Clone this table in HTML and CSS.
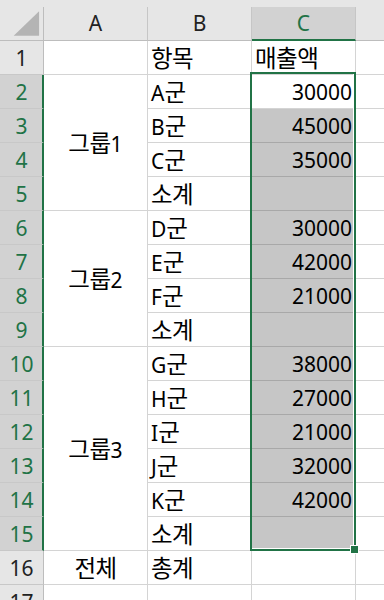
FILE: index.html
```html
<!DOCTYPE html>
<html lang="ko">
<head>
<meta charset="utf-8">
<link rel="stylesheet" href="styles.css">
</head>
<body>
<div class="wrap">
  <div class="topstrip"></div>
  <div class="sheet">
    <div class="corner"><svg width="44" height="34" viewBox="0 0 44 34"><polygon points="14,29 40,29 40,4" fill="#b4b4b4"/></svg></div>
    <div class="colhead">A</div>
    <div class="colhead">B</div>
    <div class="colhead sel">C</div>
    <div class="colhead last"></div>

    <div class="rowhead">1</div>
    <div class="cell"></div>
    <div class="cell"><span class="t"><span class="ko">항목</span></span></div>
    <div class="cell"><span class="t"><span class="ko">매출액</span></span></div>
    <div class="cell last"></div>

    <div class="rowhead sel">2</div>
    <div class="cell merged r2-5"><span class="t"><span class="ko">그룹</span>1</span></div>
    <div class="cell"><span class="t">A<span class="ko">군</span></span></div>
    <div class="cell num">30000</div>
    <div class="cell last"></div>

    <div class="rowhead sel">3</div>
    <div class="cell"><span class="t">B<span class="ko">군</span></span></div>
    <div class="cell num gray">45000</div>
    <div class="cell last"></div>

    <div class="rowhead sel">4</div>
    <div class="cell"><span class="t">C<span class="ko">군</span></span></div>
    <div class="cell num gray">35000</div>
    <div class="cell last"></div>

    <div class="rowhead sel">5</div>
    <div class="cell"><span class="t"><span class="ko">소계</span></span></div>
    <div class="cell num gray"></div>
    <div class="cell last"></div>

    <div class="rowhead sel">6</div>
    <div class="cell merged r6-9"><span class="t"><span class="ko">그룹</span>2</span></div>
    <div class="cell"><span class="t">D<span class="ko">군</span></span></div>
    <div class="cell num gray">30000</div>
    <div class="cell last"></div>

    <div class="rowhead sel">7</div>
    <div class="cell"><span class="t">E<span class="ko">군</span></span></div>
    <div class="cell num gray">42000</div>
    <div class="cell last"></div>

    <div class="rowhead sel">8</div>
    <div class="cell"><span class="t">F<span class="ko">군</span></span></div>
    <div class="cell num gray">21000</div>
    <div class="cell last"></div>

    <div class="rowhead sel">9</div>
    <div class="cell"><span class="t"><span class="ko">소계</span></span></div>
    <div class="cell num gray"></div>
    <div class="cell last"></div>

    <div class="rowhead sel">10</div>
    <div class="cell merged r10-15"><span class="t"><span class="ko">그룹</span>3</span></div>
    <div class="cell"><span class="t">G<span class="ko">군</span></span></div>
    <div class="cell num gray">38000</div>
    <div class="cell last"></div>

    <div class="rowhead sel">11</div>
    <div class="cell"><span class="t">H<span class="ko">군</span></span></div>
    <div class="cell num gray">27000</div>
    <div class="cell last"></div>

    <div class="rowhead sel">12</div>
    <div class="cell"><span class="t">I<span class="ko">군</span></span></div>
    <div class="cell num gray">21000</div>
    <div class="cell last"></div>

    <div class="rowhead sel">13</div>
    <div class="cell"><span class="t">J<span class="ko">군</span></span></div>
    <div class="cell num gray">32000</div>
    <div class="cell last"></div>

    <div class="rowhead sel">14</div>
    <div class="cell"><span class="t">K<span class="ko">군</span></span></div>
    <div class="cell num gray">42000</div>
    <div class="cell last"></div>

    <div class="rowhead sel">15</div>
    <div class="cell"><span class="t"><span class="ko">소계</span></span></div>
    <div class="cell num gray"></div>
    <div class="cell last"></div>

    <div class="rowhead">16</div>
    <div class="cell center"><span class="t"><span class="ko">전체</span></span></div>
    <div class="cell"><span class="t"><span class="ko">총계</span></span></div>
    <div class="cell"></div>
    <div class="cell last"></div>

    <div class="rowhead">17</div>
    <div class="cell"></div>
    <div class="cell"></div>
    <div class="cell"></div>
    <div class="cell last"></div>
  </div>
  <div class="selection"></div>
  <div class="handle"></div>
</div>
</body>
</html>
```

FILE: styles.css
```css
html, body {
  margin: 0;
  padding: 0;
  background: #ffffff;
}
body {
  width: 384px;
  height: 600px;
  overflow: hidden;
  font-family: "Noto Sans", "Noto Sans CJK KR", sans-serif;
  font-size: 21px;
  color: #000;
}
.wrap {
  position: relative;
  width: 384px;
  height: 600px;
  overflow: hidden;
}
.topstrip {
  height: 7px;
  background: #e6e6e6;
}
.sheet {
  display: grid;
  grid-template-columns: 44px 104px 104px 104px 60px;
  grid-template-rows: 34px repeat(17, 34px);
}
.sheet > div {
  box-sizing: border-box;
  display: flex;
  align-items: center;
  white-space: nowrap;
  overflow: hidden;
}
.t {
  display: block;
  line-height: 26px;
}
.ko {
  font-family: "Noto Sans CJK KR", sans-serif;
  font-size: 23.5px;
  letter-spacing: -0.5px;
}
.corner {
  background: #e6e6e6;
  border-right: 1px solid #bdbdbd;
  border-bottom: 1px solid #bdbdbd;
}
.corner svg {
  display: block;
}
.colhead {
  background: #e6e6e6;
  border-right: 1px solid #c6c6c6;
  border-bottom: 1px solid #bdbdbd;
  justify-content: center;
  color: #222;
  padding-bottom: 1px;
}
.colhead.sel {
  background: #d2d2d2;
  color: #217346;
  border-bottom: 2px solid #217346;
  padding-bottom: 0;
}
.colhead.last {
  border-right: none;
}
.rowhead {
  background: #e6e6e6;
  border-right: 1px solid #bdbdbd;
  border-bottom: 1px solid #c8c8c8;
  justify-content: center;
  color: #222;
}
.rowhead.sel {
  background: #d2d2d2;
  color: #217346;
  border-right: 2px solid #217346;
  padding-left: 1px;
}
.cell {
  border-right: 1px solid #d4d4d4;
  border-bottom: 1px solid #d4d4d4;
  padding: 0 3px 0 3px;
}
.cell.last {
  border-right: none;
}
.cell.num {
  justify-content: flex-end;
}
.cell.gray {
  background: #c6c6c6;
  border-bottom-color: #a8a8a8;
}
.cell.center,
.cell.merged {
  justify-content: center;
}
.r2-5 { grid-row: 3 / span 4; }
.r6-9 { grid-row: 7 / span 4; }
.r10-15 { grid-row: 11 / span 6; }
.merged { grid-column: 2; }

.selection {
  position: absolute;
  left: 250px;
  top: 72px;
  width: 106px;
  height: 479px;
  box-sizing: border-box;
  border: 2px solid #217346;
  box-shadow: inset -1px -1px 0 #ffffff;
}
.handle {
  position: absolute;
  left: 350px;
  top: 545px;
  width: 9px;
  height: 9px;
  box-sizing: border-box;
  background: #217346;
  border: 1px solid #ffffff;
}
```
